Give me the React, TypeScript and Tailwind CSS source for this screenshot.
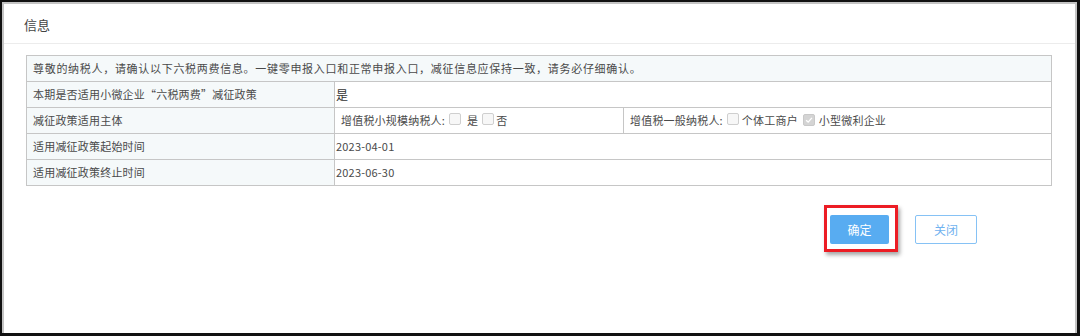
const Checkbox = ({ checked = false }: { checked?: boolean }) => (
  <span
    className={`inline-flex h-[12px] w-[12px] items-center justify-center rounded-[2px] border ${
      checked ? "border-[#c9c9c9] bg-[#d4d4d4]" : "border-[#cfcfcf] bg-[#f7f7f7]"
    }`}
  >
    {checked && (
      <svg viewBox="0 0 12 12" className="h-[10px] w-[10px]">
        <path d="M2.5 6.2 L5 8.5 L9.5 3.5" fill="none" stroke="#ffffff" strokeWidth="1.6" />
      </svg>
    )}
  </span>
);

const App = () => {
  const labelCell = "h-[26px] border border-[#c6c6c6] bg-[#f5f9fa] pl-[6px] align-middle";
  const valueCell = "h-[26px] border border-[#c6c6c6] bg-white align-middle";

  return (
    <div
      className="h-[336px] w-[1080px] overflow-hidden border-t-2 border-l-2 border-r-[3px] border-b-[3px] border-[#111] bg-white"
      style={{ fontFamily: '"Noto Sans CJK SC", "Noto Sans", sans-serif' }}
    >
      <div className="flex h-full flex-col border-t-2 border-l-2 border-r-2 border-[#c4c4c4] bg-white">
        <div className="flex h-[40px] items-center border-b border-[#ececec] pl-[20px] pt-[2px] text-[13px] text-[#444]">
          信息
        </div>

        <div className="pl-[22px] pr-[23px] pt-[11px]">
          <table className="w-full table-fixed border-collapse text-[11px] tracking-[0.2px] text-[#4a4a4a]">
            <colgroup>
              <col className="w-[308px]" />
              <col className="w-[289px]" />
              <col />
            </colgroup>
            <tbody>
              <tr>
                <td colSpan={3} className={`${labelCell} tracking-[0.7px]`}>
                  尊敬的纳税人，请确认以下六税两费信息。一键零申报入口和正常申报入口，减征信息应保持一致，请务必仔细确认。
                </td>
              </tr>
              <tr>
                <td className={labelCell}>本期是否适用小微企业“六税两费”减征政策</td>
                <td colSpan={2} className={`${valueCell} pl-[1px] text-[12px] text-[#333]`}>
                  是
                </td>
              </tr>
              <tr>
                <td className={labelCell}>减征政策适用主体</td>
                <td className={`${valueCell} pl-[6px]`}>
                  <div className="flex items-center">
                    <span>增值税小规模纳税人:</span>
                    <span className="ml-[4px]"><Checkbox /></span>
                    <span className="ml-[6px]">是</span>
                    <span className="ml-[4px]"><Checkbox /></span>
                    <span className="ml-[2px]">否</span>
                  </div>
                </td>
                <td className={`${valueCell} pl-[6px]`}>
                  <div className="flex items-center">
                    <span>增值税一般纳税人:</span>
                    <span className="ml-[4px]"><Checkbox /></span>
                    <span className="ml-[3px]">个体工商户</span>
                    <span className="ml-[5px]"><Checkbox checked /></span>
                    <span className="ml-[4px]">小型微利企业</span>
                  </div>
                </td>
              </tr>
              <tr>
                <td className={labelCell}>适用减征政策起始时间</td>
                <td colSpan={2} className={`${valueCell} pl-[1px]`}>
                  2023-04-01
                </td>
              </tr>
              <tr>
                <td className={labelCell}>适用减征政策终止时间</td>
                <td colSpan={2} className={`${valueCell} pl-[1px]`}>
                  2023-06-30
                </td>
              </tr>
            </tbody>
          </table>

          <div className="mt-[29px] flex justify-end gap-[26px] pr-[75px]">
            <div className="relative">
              <button className="h-[29px] w-[59px] rounded-[2px] bg-[#58acf1] text-[12px] text-white">
                确定
              </button>
              <div className="absolute left-[-6px] top-[-10px] h-[47px] w-[74px] border-[3px] border-[#ec1c24] shadow-[2px_3px_4px_rgba(0,0,0,0.35)]" />
            </div>
            <button className="h-[29px] w-[62px] rounded-[2px] border border-[#86c2f5] bg-white text-[12px] text-[#6fb2ef]">
              关闭
            </button>
          </div>
        </div>
      </div>
    </div>
  );
};

export default App;
